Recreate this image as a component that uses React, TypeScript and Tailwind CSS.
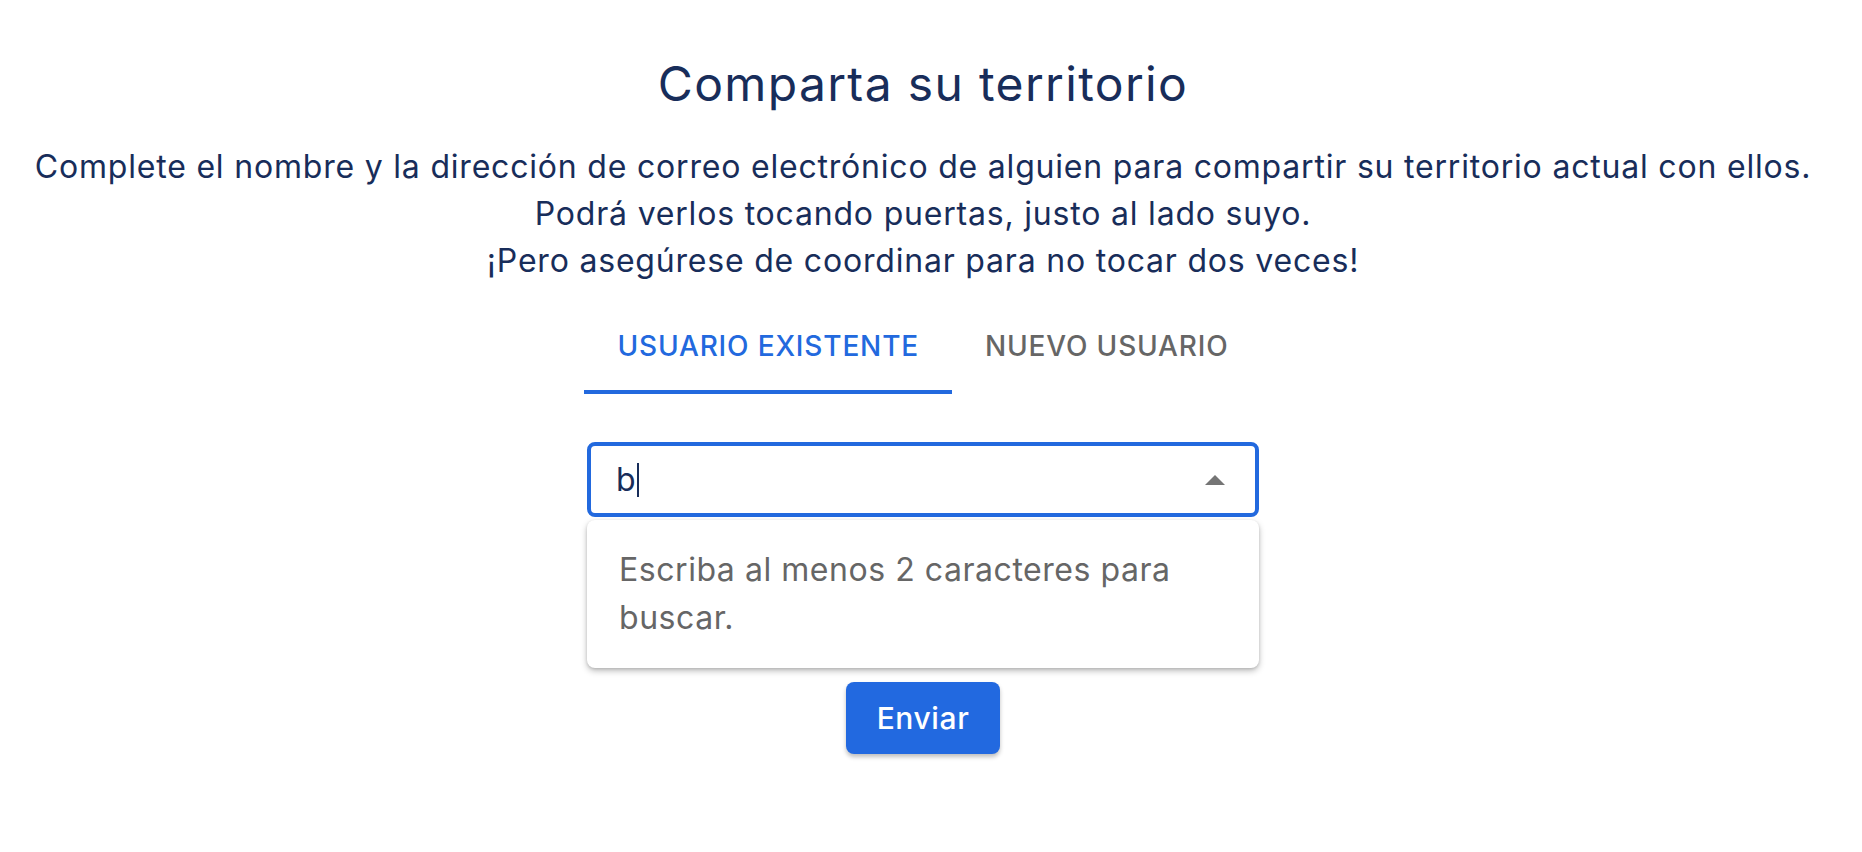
import React from "react";

const font = { fontFamily: "Inter, 'Open Sans', sans-serif" };

function Tab({ label, active }: { label: string; active?: boolean }) {
  return (
    <div
      className={`relative flex h-[96px] items-center justify-center px-[33px] text-[28px] font-medium uppercase tracking-[0.03em] ${
        active ? "text-[#2269de]" : "text-[#666666]"
      }`}
    >
      {label}
      {active && <span className="absolute bottom-0 left-0 right-0 h-[4px] bg-[#2269de]" />}
    </div>
  );
}

export default function App() {
  return (
    <div className="min-h-[852px] w-[1846px] bg-white" style={font}>
      <div className="flex flex-col items-center">
        <h1 className="mt-[52px] text-[48px] leading-[64px] font-normal tracking-[0.028em] text-[#182d5a]">
          Comparta su territorio
        </h1>

        <div className="mt-[27px] text-center text-[32px] leading-[47px] tracking-[0.025em] text-[#182d5a]">
          <p>
            Complete el nombre y la dirección de correo electrónico de alguien para compartir su territorio actual con ellos.
          </p>
          <p>Podrá verlos tocando puertas, justo al lado suyo.</p>
          <p>¡Pero asegúrese de coordinar para no tocar dos veces!</p>
        </div>

        <div className="mt-[14px] flex">
          <Tab label="Usuario existente" active />
          <Tab label="Nuevo usuario" />
        </div>

        <div className="relative mt-[48px] w-[672px]">
          <div className="flex h-[75px] items-center rounded-[8px] border-[4px] border-[#2269de] pl-[25px] pr-[30px]">
            <span className="text-[32px] text-[#182d5a]">b</span>
            <span className="ml-[1px] h-[34px] w-[2px] bg-[#182d5a]" />
            <div className="flex-1" />
            <svg width="20" height="10" viewBox="0 0 20 10">
              <path d="M0 10 L10 0 L20 10 Z" fill="#757575" />
            </svg>
          </div>

          <div className="absolute left-0 right-0 top-[78px] z-10 rounded-[8px] bg-white px-[32px] py-[26px] text-[32px] leading-[48px] tracking-[0.017em] text-[#666666] shadow-[0_3px_6px_rgba(0,0,0,0.25),0_1px_3px_rgba(0,0,0,0.12)]">
            Escriba al menos 2 caracteres para
            <br />
            buscar.
          </div>
        </div>

        <button className="mt-[165px] h-[72px] w-[154px] rounded-[8px] bg-[#2269e0] text-[30px] font-medium tracking-[0.02em] text-white shadow-[0_3px_4px_rgba(0,0,0,0.25)]">
          Enviar
        </button>
      </div>
    </div>
  );
}
